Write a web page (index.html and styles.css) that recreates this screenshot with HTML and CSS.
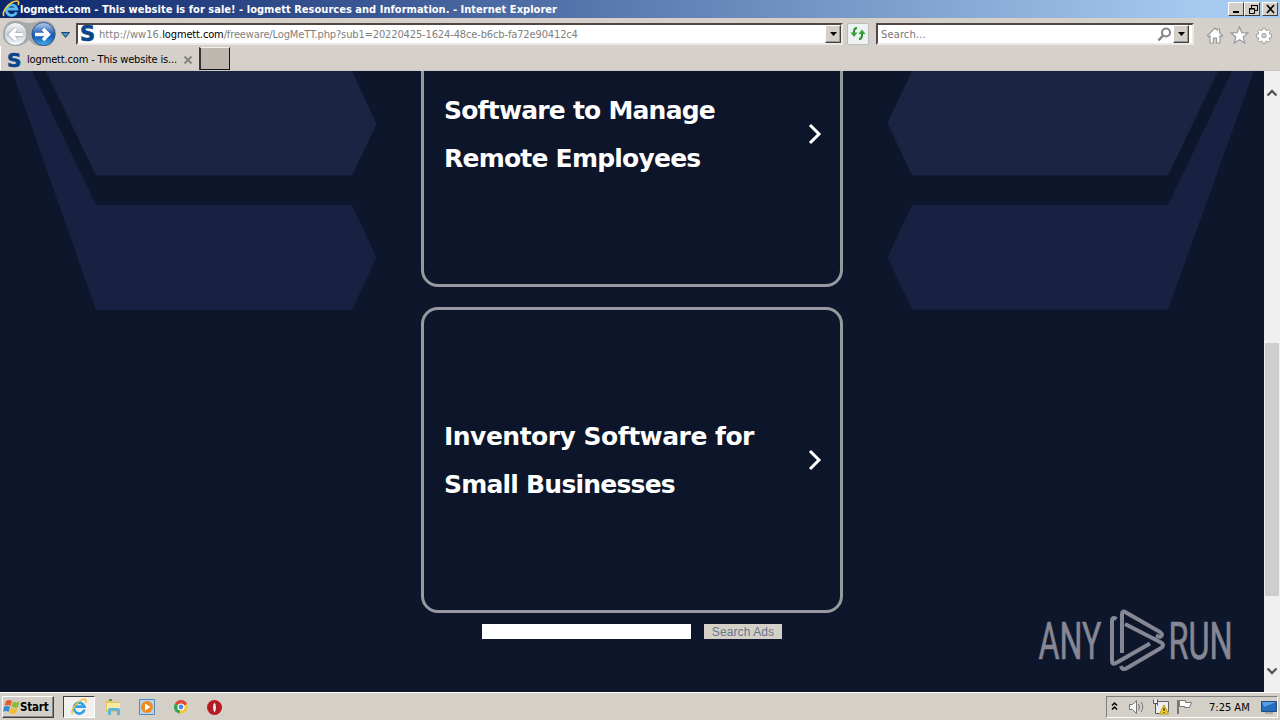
FILE: index.html
```html
<!DOCTYPE html>
<html lang="en">
<head>
<meta charset="utf-8">
<title>logmett.com - This website is for sale!</title>
<link rel="stylesheet" href="styles.css">
</head>
<body>
<div class="desktop">
  <header class="titlebar">
    <svg class="title-ie" width="18" height="18" viewBox="0 0 18 18"><path d="M14.500 12.200A5.300 5.300 0 1 1 14.800 9H5.500" fill="none" stroke="#55bdf1" stroke-width="2.800"/><path d="M2 16C-1 12 8 1 15 1c2 0 2 2 1 4" fill="none" stroke="#f6cf38" stroke-width="1.600"/></svg>
    <h1 class="title-text"><span>logmett.com - This website is for sale! - logmett Resources and Information. - Internet Explorer</span></h1>
    <div class="window-buttons">
      <span class="win-btn"><svg width="13" height="10"><path d="M3 8h6" stroke="#000" stroke-width="2"/></svg></span>
      <span class="win-btn"><svg width="13" height="10"><path d="M5.500 4V1.500h6v5H9M5 1.500h7M3.500 4.500h5v5h-5zM3 5h6" fill="none" stroke="#000"/></svg></span>
      <span class="win-btn close"><svg width="13" height="10"><path d="M3 1l7 8M10 1L3 9" stroke="#000" stroke-width="1.700"/></svg></span>
    </div>
  </header>
  <div class="toolbar">
    <svg class="nav" width="76" height="28" viewBox="0 18 76 28">
      <defs>
        <linearGradient id="blue" x1="0" y1="0" x2="0" y2="1"><stop stop-color="#b9d2ef"/><stop offset=".45" stop-color="#2d68b7"/><stop offset=".6" stop-color="#1259b5"/><stop offset="1" stop-color="#48b1f1"/></linearGradient>
        <linearGradient id="pale" x1="0" y1="0" x2="0" y2="1"><stop stop-color="#f7f8f9"/><stop offset=".5" stop-color="#c9d1da"/><stop offset="1" stop-color="#fafcff"/></linearGradient>
      </defs>
      <path d="M9 21Q16 18 23 21Q29 23 36 21Q43 18 50 21Q56 25 56 33Q54 46 43 46Q35 46 29 39Q24 45 15 45Q3 44 3 33Q3 25 9 21Z" fill="#aaa9aa"/>
      <circle cx="15.500" cy="33" r="11.500" fill="url(#pale)" stroke="#939ba4"/>
      <circle cx="43.500" cy="33" r="11.500" fill="url(#blue)" stroke="#31558b"/>
      <path d="M23 33.500H10M16 28l-5.500 5.500 5.500 5.500" stroke="#9ea8b2" stroke-width="5" fill="none"/>
      <path d="M23 33.500H10M16 28l-5.500 5.500 5.500 5.500M35 33.500h14M43 28l5.500 5.500-5.500 5.500" stroke="#fff" stroke-width="3.400" fill="none"/>
      <path d="M61.500 31.500h8l-4 5z" fill="#3a91c7" stroke="#254366"/>
    </svg>
    <div class="field address">
      <span class="site-s">S</span>
      <span class="url"><span><i>http://ww16.</i><b>logmett.com</b>/freeware/LogMeTT.php?sub1=20220425-1624-48ce-b6cb-fa72e90412c4</span></span>
      <span class="drop"><svg width="9" height="5"><path d="M1 0h7L4.500 4z"/></svg></span>
    </div>
    <div class="refresh"><svg width="18" height="18" viewBox="0 0 18 18" fill="none" stroke="#258d28" stroke-width="2"><path d="M8 3Q5 3 5 7v2M10 14q3 0 3-4V8"/><path d="M1.500 7.500h7L5 12zM9.500 9h7L13 4.500z" fill="#36a334" stroke="none"/></svg></div>
    <div class="field search">
      <span class="placeholder"><span>Search...</span></span>
      <svg width="15" height="15" viewBox="0 0 15 15" fill="none" stroke="#85858a"><circle cx="9" cy="5.500" r="4" stroke-width="2"/><path d="M6 8.500l-4.500 5" stroke-width="2.600"/></svg>
      <span class="drop"><svg width="9" height="5"><path d="M1 0h7L4.500 4z"/></svg></span>
    </div>
    <svg class="tools" width="74" height="20" viewBox="0 0 74 20" fill="#fff" stroke="#99999d" stroke-width="1.200">
      <path d="M1.500 10.500L9 3l2 2V4h2.500v3.500L16.500 10.500l-1.500 1.500-1-1v7H10.500v-5h-3v5H4v-7l-1 1z"/>
      <path d="M33.500 2l2.300 5.700 6.200.3-4.800 4 1.600 6-5.300-3.300-5.300 3.300 1.600-6L25 8l6.200-.3z"/>
      <g transform="translate(58 10.500) scale(.82) translate(-58 -10.900)"><path d="M56.500 2h3l.5 2.300 1.600.7 2-1.400 2.100 2.100-1.400 2 .7 1.600 2.300.5v3l-2.300.5-.7 1.600 1.400 2-2.100 2-2-1.300-1.600.6-.5 2.300h-3l-.5-2.300-1.600-.6-2 1.300-2.100-2 1.400-2-.7-1.600-2.300-.5v-3l2.300-.5.7-1.600-1.400-2 2.100-2.100 2 1.400 1.600-.7z"/><circle cx="58" cy="11" r="2.700" fill="#d4d0c8"/></g>
    </svg>
  </div>
  <nav class="tabs">
    <div class="tab"><span class="site-s small">S</span><span class="tab-label"><span>logmett.com - This website is...</span></span><svg width="10" height="10"><path d="M1.500 1.500l7 7M8.500 1.500l-7 7" stroke="#898580" stroke-width="2"/></svg></div>
    <div class="new-tab"></div>
  </nav>
  <div class="browser-view">
    <main class="page">
      <svg class="backdrop" width="1264" height="621" viewBox="0 71 1264 621">
        <path d="M46 71H352L376.500 124 352 175.500H96Z" fill="#1a2544"/><path d="M12 71H32L96 205H352L376.500 257.500 352 310H96Z" fill="#172142"/>
        <path d="M1218 71H912L887.500 123 912 175.500H1168Z" fill="#1a2544"/><path d="M1254 71H1232L1168 205H912L887.500 257.500 912 309.500H1168Z" fill="#172142"/>
      </svg>
      <div class="content">
        <a class="card"><span class="label"><span>Software to Manage</span><br><span>Remote Employees</span></span><svg width="14" height="22" viewBox="0 0 14 22"><path d="M2 2l9 9-9 9" fill="none" stroke="#fff" stroke-width="3"/></svg></a>
        <a class="card"><span class="label"><span class="wide">Inventory Software for</span><br><span>Small Businesses</span></span><svg width="14" height="22" viewBox="0 0 14 22"><path d="M2 2l9 9-9 9" fill="none" stroke="#fff" stroke-width="3"/></svg></a>
        <div class="ads"><span class="ads-input"></span><span class="ads-button"><span>Search Ads</span></span></div>
      </div>
      <svg class="watermark" width="210" height="66" viewBox="1037 608 210 66">
        <g class="brand"><text transform="translate(1038.500 659) scale(.625 1)">ANY</text><text transform="translate(1168.500 659) scale(.63 1)">RUN</text></g>
        <path d="M1116.500 619Q1112 616 1112 621V661Q1112 665 1116 663L1150 643.500M1122 653V614Q1122 610 1126 612.500L1160 632Q1164 635 1160 637L1156 635.500M1121 666Q1122 671 1127 668L1161 648Q1165 645 1161 642.500L1125 624" fill="none" stroke="#858794" stroke-width="4" stroke-linejoin="round"/>
      </svg>
    </main>
    <aside class="scrollbar">
      <svg width="12" height="8"><path d="M1.500 6.500L6 2l4.500 4.500" fill="none" stroke="#555" stroke-width="2.300"/></svg>
      <div class="thumb"></div>
      <svg width="12" height="8"><path d="M1.500 1.500L6 6l4.500-4.500" fill="none" stroke="#555" stroke-width="2.300"/></svg>
    </aside>
  </div>
  <footer class="taskbar">
    <div class="start"><svg width="18" height="18" viewBox="0 0 18 18"><path d="M3 3q3-2 6 0L7.500 8q-3-2-6 0z" fill="#e75b2d"/><path d="M10 3.500q3 2 6.500 0L15 9q-3 1.500-6.500-.5z" fill="#8aba36"/><path d="M1 9q3-2 6 0l-1.500 5q-3-2-5.500 0z" fill="#368bd1"/><path d="M8 9.500q3 2 6.500.5L13 15q-3 2-6.500 0z" fill="#f1be31"/></svg><span>Start</span></div>
    <div class="task-active"><svg width="18" height="18" viewBox="0 0 20 20"><path d="M16 13A6 6 0 1 1 16 9.500H6" fill="none" stroke="#2fa3e4" stroke-width="3"/><path d="M3 18C-1 15 9 2 16 1.500q3 0 1.500 4" fill="none" stroke="#efc13b" stroke-width="1.700"/></svg></div>
    <svg class="launch" width="118" height="20" viewBox="104 697 118 20">
      <path d="M106 700h6l1 2h7v10h-14z" fill="#e4c561"/><path d="M107 703h13v7h-13z" fill="#f8e9a0"/><path d="M109 700h3" stroke="#42a55a" stroke-width="2"/><path d="M108 715v-5q0-2 2-2h8q2 0 2 2v5h-3v-4h-6v4z" fill="#62b3d9"/>
      <path d="M139.500 699.500h15v15h-15z" fill="#b8d4ea" stroke="#518bbd"/><circle cx="147" cy="707" r="6" fill="#ee8b21"/><path d="M145 703.500l5.500 3.500-5.500 3.500z" fill="#fff"/>
      <circle cx="181" cy="707" r="6.500" fill="#f8c62c"/><path d="M181 707L175 704A6.500 6.500 0 0 1 187 704z" fill="#df4937"/><path d="M181 707l-6-3.500a6.500 6.500 0 0 0 4.500 10z" fill="#34a557"/><circle cx="181" cy="707" r="3" fill="#438bea" stroke="#fff" stroke-width="1.200"/>
      <circle cx="214.500" cy="707.500" r="7.500" fill="#bd1722"/><ellipse cx="214.500" cy="707.500" rx="2" ry="5" fill="#f4e9e7" stroke="#83131a"/>
    </svg>
    <div class="tray">
      <svg width="88" height="20" viewBox="1107 697 88 20" fill="none">
        <path d="M1112 705.500l2.500-2.500 2.500 2.500M1112 709.500l2.500-2.500 2.500 2.500" stroke="#000" stroke-width="1.500"/>
        <path d="M1129.500 704.500h3l4-4v13l-4-4h-3z" fill="#f8f8f8" stroke="#77777a"/><path d="M1138.500 704q2 3 0 6M1141 702q3.500 5 0 10" stroke="#77777a"/>
        <path d="M1157.500 701.500h11v10h-11z" fill="#ededed" stroke="#666"/><path d="M1153.500 699.500v4h4v-4M1155.500 703v10.500h8" fill="#eee" stroke="#555"/><path d="M1164 705l4.500 9h-9z" fill="#f6d22c" stroke="#b99817"/><path d="M1164 708v3m0 1v1" stroke="#000"/>
        <path d="M1178 700v14" stroke="#77777a" stroke-width="2"/><path d="M1179.500 700.500h6v2h6l-2 5h-5v-1h-5z" fill="#fff" stroke="#77777a"/>
      </svg>
      <time class="clock"><span>7:25 AM</span></time>
      <svg width="16" height="16" viewBox="0 0 16 16"><path d="M.5 2.500h15v10h-15z" fill="#236dbd" stroke="#1e4b87"/><path d="M1 3h14L3 8z" fill="#5a9fdf"/><path d="M4 14h8" stroke="#77818e"/></svg>
    </div>
  </footer>
</div>
</body>
</html>
```
FILE: styles.css
```css
* { box-sizing: border-box; }
body { margin: 0; overflow: hidden; font: 11px/14px "DejaVu Sans Condensed", "DejaVu Sans", sans-serif; font-stretch: condensed; }
svg { display: block; flex: none; }
.desktop { width: 1280px; height: 720px; display: flex; flex-direction: column; background: #d4d0c8; overflow: hidden; }
.titlebar { height: 18px; flex: none; display: flex; align-items: center; padding: 0 2px; background: linear-gradient(90deg, #0b256b, #a6caf0 94%); color: #fff; }
.title-text { margin: 0 auto 0 0; padding-top: 1px; font-size: 11px; line-height: 16px; font-weight: bold; white-space: nowrap; letter-spacing: .03px; }
.window-buttons { display: flex; }
.win-btn { width: 16px; height: 14px; display: flex; justify-content: center; align-items: center; background: #d4d0c8; border: 1px solid; border-color: #fff #404040 #404040 #fff; }
.close { margin-left: 2px; }
.toolbar { height: 28px; flex: none; display: flex; align-items: center; background: #d5d0ca; border-top: 1px solid #d4d0c8; }
.nav { margin-top: 0; }
.field { height: 22px; display: flex; align-items: center; background: #fff; border: 2px solid; border-color: #504844 #eee9e5 #eee9e5 #504844; }
.address { width: 767px; margin-top: 3px; padding-left: 2px; }
.site-s { width: 17px; flex: none; color: #08458b; font: bold 21px/17px "DejaVu Sans", sans-serif; font-stretch: normal; -webkit-text-stroke: .6px #08458b; }
.url { margin: 0 auto 0 2px; padding-top: 1px; color: #808080; white-space: nowrap; letter-spacing: -.13px; }
.url i { font-style: normal; letter-spacing: .08px; }
.url b { color: #000; font-weight: normal; letter-spacing: -.13px; }
.drop { width: 16px; height: 18px; flex: none; display: flex; align-items: center; justify-content: center; background: #d4d0c8; border: 1px solid; border-color: #fff #404040 #404040 #fff; box-shadow: inset -1px -1px #999; }
.refresh { width: 22px; height: 22px; margin: 3px 7px 0 4px; display: grid; place-items: center; background: #edf2f3; border: 1px solid #bdbdbb; border-radius: 2px; }
.search { width: 318px; margin-top: 3px; padding: 0 3px 0 3px; gap: 1px; }
.placeholder { margin-right: auto; padding-top: 1px; color: #777; letter-spacing: .15px; }
.tools { margin: 5px 0 0 12px; }
.tabs { height: 25px; flex: none; display: flex; background: #d5d0ca; border-bottom: 1px solid #c9c8c5; }
.tab { width: 199px; padding: 4px 6px 0 6px; display: flex; align-items: center; border-left: 1px solid #fff; }
.small { font-size: 20px; width: 20px; }
.tab-label { margin-right: auto; white-space: nowrap; color: #000; letter-spacing: -.15px; }
.new-tab { width: 31px; height: 23px; margin-top: 1px; background: #bdb7b0; border: 2px solid; border-color: #eee #151515 #151515 #333; border-width: 1px 1px 1px 2px; }
.browser-view { height: 621px; flex: none; display: flex; }
.page { width: 1264px; height: 621px; flex: none; position: relative; overflow: hidden; background: #0e162b; }
.backdrop { position: absolute; inset: 0; }
.content { position: relative; width: 422px; margin: -90px auto 0 421px; }
.card { height: 306px; display: flex; align-items: center; justify-content: space-between; padding: 0 18px 0 20px; border: 3px solid #9899a0; border-radius: 17px; background: #0d152a; color: #fff; font: bold 25px/48px "DejaVu Sans", sans-serif; font-stretch: normal; margin-bottom: 20px; letter-spacing: -.78px; }
.label { padding-top: 2px; white-space: nowrap; }
.wide { letter-spacing: -.5px; }
.ads { display: flex; height: 15px; margin: -9px 0 0 61px; }
.ads-input { width: 209px; background: #fff; }
.ads-button { width: 78px; margin-left: 13px; padding-top: 1px; background: #d4d0c8; color: #667888; font: 12px/15px "Liberation Sans", sans-serif; text-align: center; white-space: nowrap; letter-spacing: .1px; }
.watermark { position: absolute; left: 1037px; top: 537px; }
.brand { font: 51.500px Roboto, sans-serif; fill: #858794; stroke: #858794; stroke-width: .7px; }
.scrollbar { width: 16px; background: #f0f0f0; display: flex; flex-direction: column; align-items: center; padding: 18px 0 17px; }
.thumb { width: 14px; height: 253px; margin: 246px 0 auto; background: #cdcdcd; }
.taskbar { height: 28px; display: flex; align-items: center; background: #d4d0c8; border-top: 1px solid #fff; padding: 1px 2px 0; }
.start { width: 52px; height: 22px; display: flex; align-items: center; border: 1px solid; border-color: #fff #404040 #404040 #fff; box-shadow: inset -1px -1px #888; font-weight: bold; font-size: 11.500px; letter-spacing: -.2px; }
.start svg { margin-right: -1px; }
.task-active { width: 32px; height: 22px; margin-left: 9px; display: grid; place-items: center; background: #f3f1ed; border: 1px solid; border-color: #404040 #fff #fff #404040; }
.launch { margin-left: 9px; }
.tray { width: 172px; height: 22px; margin-left: auto; display: flex; align-items: center; border: 1px solid; border-color: #808080 #fff #fff #808080; }
.clock { margin-left: 14px; margin-right: auto; padding-top: 1px; white-space: nowrap; letter-spacing: 0; }
```
